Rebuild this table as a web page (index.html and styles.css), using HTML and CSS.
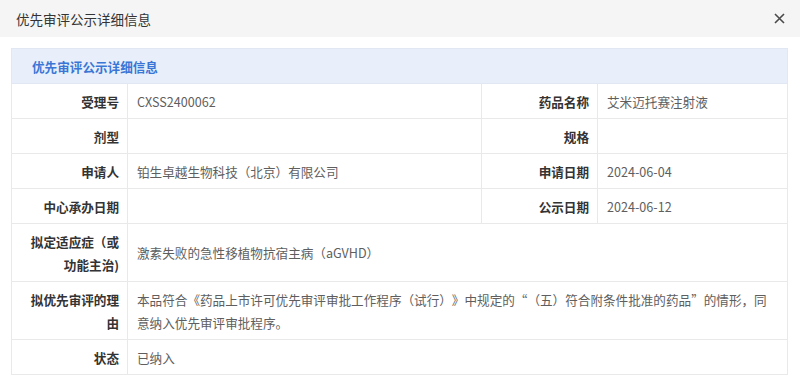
FILE: index.html
```html
<!DOCTYPE html>
<html lang="zh-CN">
<head>
<meta charset="utf-8">
<title>优先审评公示详细信息</title>
<link rel="stylesheet" href="styles.css">
</head>
<body>
<div class="dialog">
  <div class="dialog-header">
    <span class="dialog-title">优先审评公示详细信息</span>
    <span class="dialog-close" aria-label="关闭">
      <svg width="11" height="11" viewBox="0 0 11 11"><path d="M1 1L10 10M10 1L1 10" stroke="#4a4a4a" stroke-width="1.6" fill="none"/></svg>
    </span>
  </div>
  <div class="dialog-body">
    <table class="info">
      <colgroup>
        <col class="c-label"><col class="c-value"><col class="c-label"><col class="c-value2">
      </colgroup>
      <tr><th colspan="4" class="section">优先审评公示详细信息</th></tr>
      <tr>
        <td class="label">受理号</td><td class="value">CXSS2400062</td>
        <td class="label">药品名称</td><td class="value">艾米迈托赛注射液</td>
      </tr>
      <tr>
        <td class="label">剂型</td><td class="value"></td>
        <td class="label">规格</td><td class="value"></td>
      </tr>
      <tr>
        <td class="label">申请人</td><td class="value">铂生卓越生物科技（北京）有限公司</td>
        <td class="label">申请日期</td><td class="value">2024-06-04</td>
      </tr>
      <tr>
        <td class="label">中心承办日期</td><td class="value"></td>
        <td class="label">公示日期</td><td class="value">2024-06-12</td>
      </tr>
      <tr>
        <td class="label">拟定适应症（或功能主治)</td>
        <td class="value wide" colspan="3">激素失败的急性移植物抗宿主病（aGVHD）</td>
      </tr>
      <tr>
        <td class="label">拟优先审评的理由</td>
        <td class="value wide" colspan="3">本品符合《药品上市许可优先审评审批工作程序（试行）》中规定的“（五）符合附条件批准的药品”的情形，同意纳入优先审评审批程序。</td>
      </tr>
      <tr>
        <td class="label">状态</td>
        <td class="value wide" colspan="3">已纳入</td>
      </tr>
    </table>
  </div>
</div>
</body>
</html>
```
FILE: styles.css
```css
html, body {
  margin: 0;
  padding: 0;
  background: #ffffff;
}
body {
  font-family: "Noto Sans CJK SC", "Noto Sans", sans-serif;
  color: #333333;
  text-spacing-trim: space-all;
}
.dialog {
  width: 800px;
}
.dialog-header {
  height: 37px;
  background: #f5f5f5;
  display: flex;
  align-items: center;
  justify-content: space-between;
  padding: 0 15px 0 16px;
}
.dialog-title {
  font-size: 13.5px;
  color: #333333;
}
.dialog-close {
  display: flex;
  align-items: center;
  width: 11px;
  height: 11px;
}
.dialog-body {
  padding: 11px 13px 0 11px;
}
.info {
  width: 776px;
  border-collapse: collapse;
  table-layout: fixed;
  font-size: 12.6px;
  line-height: 23px;
}
.c-label { width: 116px; }
.c-value { width: 354px; }
.c-value2 { width: 190px; }
.info th, .info td {
  border: 1px solid #e9e9e9;
  padding: 5.5px 8px;
  vertical-align: middle;
}
.info .section {
  background: #e8effa;
  color: #3a76d6;
  font-weight: bold;
  text-align: left;
  padding-left: 20px;
  border-color: #e1e8f3;
}
.info .label {
  text-align: right;
  font-weight: bold;
  color: #333333;
}
.info .value {
  text-align: left;
  color: #5e5e5e;
  padding-left: 9px;
  padding-right: 12px;
}
```
